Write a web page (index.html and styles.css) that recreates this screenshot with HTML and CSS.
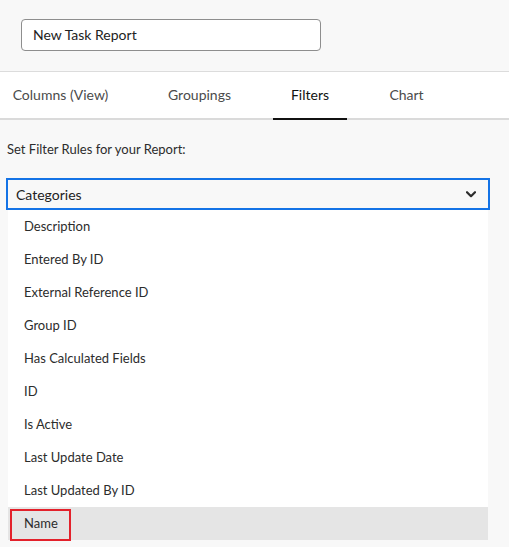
FILE: index.html
```html
<!DOCTYPE html>
<html>
<head>
<meta charset="utf-8">
<link rel="stylesheet" href="styles.css">
</head>
<body>
<div class="page">
  <header class="head">
    <div class="name-input">New Task Report</div>
  </header>
  <nav class="tabs">
    <div class="tab t1">Columns (View)</div>
    <div class="tab t2">Groupings</div>
    <div class="tab t3 active">Filters</div>
    <div class="tab t4">Chart</div>
  </nav>
  <section class="body">
    <div class="label">Set Filter Rules for your Report:</div>
    <div class="select">
      <span>Categories</span>
      <svg class="chev" width="10" height="7" viewBox="0 0 10 7"><path d="M1 1.2 L5 5.2 L9 1.2" fill="none" stroke="#2c2c2c" stroke-width="2.2" stroke-linecap="round" stroke-linejoin="round"/></svg>
    </div>
    <ul class="list">
      <li>Description</li>
      <li>Entered By ID</li>
      <li>External Reference ID</li>
      <li>Group ID</li>
      <li>Has Calculated Fields</li>
      <li>ID</li>
      <li>Is Active</li>
      <li>Last Update Date</li>
      <li>Last Updated By ID</li>
      <li class="hl">Name<span class="mark"></span></li>
    </ul>
  </section>
</div>
</body>
</html>
```
FILE: styles.css
```css
* { box-sizing: border-box; }
html, body { margin: 0; padding: 0; }
body {
  background: #f8f8f8;
  font-family: Lato, "Liberation Sans", sans-serif;
  color: #2c2c2c;
  width: 509px;
  height: 547px;
  overflow: hidden;
}
.head {
  height: 72px;
  padding: 19px 0 0 21px;
  border-bottom: 1px solid #dcdcdc;
}
.name-input {
  width: 300px;
  height: 32px;
  border: 1px solid #8e8e8e;
  border-radius: 4px;
  background: #fff;
  padding: 0 0 0 11px;
  font-size: 14px;
  line-height: 30px;
  color: #222;
}
.tabs {
  display: flex;
  height: 48px;
  background: #fff;
  border-bottom: 2px solid #dadada;
  font-size: 14px;
  color: #4b4b4b;
}
.tab {
  text-align: center;
  line-height: 46px;
  height: 48px;
  margin-bottom: -2px;
}
.t1 { width: 121px; }
.t2 { width: 99px; margin-left: 29px; }
.t3 { width: 74px; margin-left: 24px; }
.t4 { width: 71px; margin-left: 24px; }
.tab.active {
  color: #111;
  border-bottom: 2px solid #111;
}
.body {
  padding: 0 0 0 0;
}
.label {
  padding: 21px 0 0 7px;
  height: 58px;
  font-size: 13px;
  color: #2c2c2c;
}
.select {
  margin-left: 6px;
  width: 484px;
  height: 32px;
  border: 2px solid #1473e6;
  display: flex;
  align-items: center;
  justify-content: space-between;
  padding: 0 12px 0 8px;
  font-size: 14px;
  color: #222;
}
.chev { display: block; margin-top: 1px; }
.list {
  list-style: none;
  margin: 0 0 0 8px;
  padding: 0;
  width: 480px;
  background: #fff;
  font-size: 13px;
  color: #2c2c2c;
}
.list li {
  height: 33px;
  line-height: 33px;
  padding-left: 16px;
  position: relative;
}
.list li.hl { background: #e5e5e5; }
.mark {
  position: absolute;
  left: 2px;
  top: 2px;
  width: 61px;
  height: 32px;
  border: 2px solid #e3212b;
}
```
